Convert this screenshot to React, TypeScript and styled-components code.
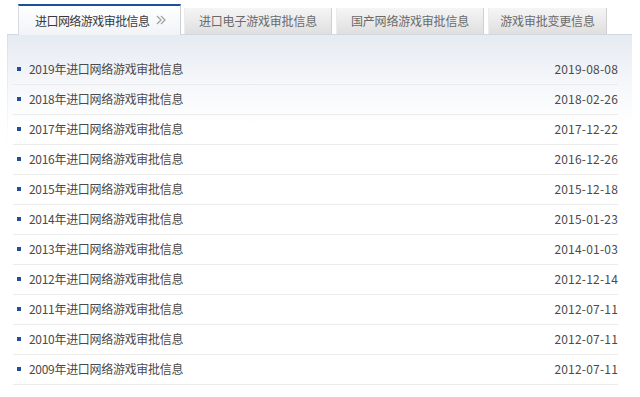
import React from "react";
import styled, { createGlobalStyle } from "styled-components";

const GlobalStyle = createGlobalStyle`
    body {
        margin: 0;
        background: #fff;
        font-family: "Noto Sans CJK SC", "Noto Sans", sans-serif;
    }
`;

const Page = styled.div`
    width: 625px;
    padding: 4px 0 0 7px;
`;

const TabBar = styled.div`
    display: flex;
    align-items: flex-end;
    gap: 4px;
    height: 30px;
    padding-left: 11px;
`;

const ActiveTab = styled.div`
    position: relative;
    z-index: 1;
    box-sizing: border-box;
    width: 163px;
    height: 31px;
    margin-bottom: -1px;
    margin-right: -1px;
    display: flex;
    align-items: center;
    padding: 0 0 1px 16px;
    gap: 6px;
    border-top: 2px solid #1d4f9e;
    border-left: 1px solid #d6dae2;
    border-right: 1px solid #c9ced7;
    background: linear-gradient(#ffffff, #f1f3f7);
    color: #3a3a3a;
    font-size: 12px;
    letter-spacing: -0.55px;
    cursor: pointer;
`;

const Tab = styled.div<{ $width: number }>`
    box-sizing: border-box;
    width: ${(p) => p.$width}px;
    height: 26px;
    display: flex;
    align-items: center;
    justify-content: center;
    padding-bottom: 1px;
    background: linear-gradient(#f5f5f5, #dfdfdf);
    box-shadow: inset -1px 0 0 #cfcfcf, inset 1px 0 0 #ececec;
    color: #6a6a6a;
    font-size: 12px;
    letter-spacing: -0.2px;
    cursor: pointer;
`;

const Panel = styled.div`
    border-top: 1px solid #d3d9e3;
    background:
        linear-gradient(#d9dee7, #ffffff 110px) left top / 1px 100% no-repeat,
        linear-gradient(#e6eaf2 0px, #f4f6f9 45px, #ffffff 90px);
    padding: 20px 14px 0 6px;
    min-height: 362px;
    box-sizing: border-box;
`;

const List = styled.ul`
    list-style: none;
    margin: 0;
    padding: 0;
`;

const Row = styled.li`
    display: flex;
    align-items: center;
    box-sizing: border-box;
    height: 30px;
    padding-bottom: 2px;
    border-bottom: 1px solid #ececec;
    font-size: 12px;
    color: #4a4a4a;
`;

const Bullet = styled.span`
    width: 4px;
    height: 4px;
    margin: 0 8px 0 4px;
    background: #1f4f9a;
    flex-shrink: 0;
`;

const Title = styled.a`
    flex: 1;
    color: inherit;
    text-decoration: none;
    letter-spacing: -0.3px;
`;

const Date = styled.span`
    color: #4a4a4a;
    letter-spacing: 0.2px;
`;

const Chevrons = () => (
    <svg width="10" height="10" viewBox="0 0 10 10" fill="none" stroke="#a0a0a0" strokeWidth="1.2">
        <path d="M1 1l4 4-4 4" />
        <path d="M5 1l4 4-4 4" />
    </svg>
);

const tabs = [
    { label: "进口电子游戏审批信息", width: 148 },
    { label: "国产网络游戏审批信息", width: 148 },
    { label: "游戏审批变更信息", width: 119 },
];

const items = [
    { year: 2019, date: "2019-08-08" },
    { year: 2018, date: "2018-02-26" },
    { year: 2017, date: "2017-12-22" },
    { year: 2016, date: "2016-12-26" },
    { year: 2015, date: "2015-12-18" },
    { year: 2014, date: "2015-01-23" },
    { year: 2013, date: "2014-01-03" },
    { year: 2012, date: "2012-12-14" },
    { year: 2011, date: "2012-07-11" },
    { year: 2010, date: "2012-07-11" },
    { year: 2009, date: "2012-07-11" },
];

const App: React.FC = () => {
    return (
        <>
            <GlobalStyle />
            <Page>
                <TabBar>
                    <ActiveTab>
                        进口网络游戏审批信息
                        <Chevrons />
                    </ActiveTab>
                    {tabs.map((t) => (
                        <Tab key={t.label} $width={t.width}>
                            {t.label}
                        </Tab>
                    ))}
                </TabBar>
                <Panel>
                    <List>
                        {items.map((item) => (
                            <Row key={item.year}>
                                <Bullet />
                                <Title href="#">{item.year}年进口网络游戏审批信息</Title>
                                <Date>{item.date}</Date>
                            </Row>
                        ))}
                    </List>
                </Panel>
            </Page>
        </>
    );
};

export default App;
